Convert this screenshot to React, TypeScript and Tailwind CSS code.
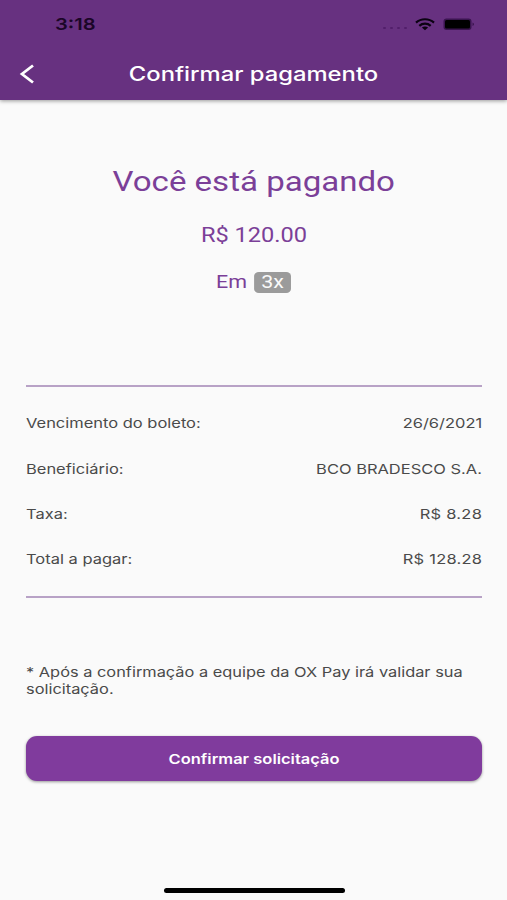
import React from 'react';

const details = [
  { label: 'Vencimento do boleto:', value: '26/6/2021', spacing: '' },
  { label: 'Beneficiário:', value: 'BCO BRADESCO S.A.', spacing: '' },
  { label: 'Taxa:', value: 'R$ 8.28', spacing: 'tracking-[0.2px]' },
  { label: 'Total a pagar:', value: 'R$ 128.28', spacing: 'tracking-[0.2px]' },
];

const StatusBar: React.FC = () => (
  <div className="flex h-[49px] items-center justify-between pl-[55px] pr-[32px] text-[#1b0628]">
    <span className="origin-left scale-x-[1.22] text-[16.5px] font-semibold leading-none">3:18</span>
    <div className="flex items-center">
      <div className="mt-[7px] mr-[8px] flex gap-[4px]">
        {[0, 1, 2, 3].map((dot) => (
          <span key={dot} className="h-[2px] w-[3px] rounded-full bg-[#521f6b]" />
        ))}
      </div>
      <svg width="20" height="13" viewBox="0 0 20 13" fill="none" stroke="#0b0212" strokeWidth="2.2">
        <path d="M1 4.6C6 .1 14 .1 19 4.6" />
        <path d="M4.3 7.8C7.6 4.9 12.4 4.9 15.7 7.8" />
        <path d="M10 12.2L6.9 9.6C8.6 8.2 11.4 8.2 13.1 9.6Z" fill="#0b0212" stroke="none" />
      </svg>
      <svg className="ml-[8px]" width="32" height="13" viewBox="0 0 32 13">
        <rect x=".5" y=".5" width="28" height="11.5" rx="3" fill="#3a144f" />
        <rect x="2" y="2" width="25" height="8.5" rx="1.5" fill="#000" />
        <path d="M29.5 4.5c2 .6 2 3 0 3.6z" fill="#3a144f" />
      </svg>
    </div>
  </div>
);

const Header: React.FC = () => (
  <header className="h-[100px] shrink-0 bg-[#673180] shadow-[0_1px_4px_rgba(0,0,0,0.4)]">
    <StatusBar />
    <div className="grid h-[50px] grid-cols-[60px_1fr_60px] items-center text-white">
      <button className="pl-[19px]" aria-label="Voltar">
        <svg width="16" height="20" viewBox="0 0 16 20" fill="none" stroke="currentColor" strokeWidth="2.8">
          <path d="M14 1.5L3 10L14 18.5" />
        </svg>
      </button>
      <h1 className="pt-[2px] scale-x-[1.22] text-center text-[19.5px] font-medium whitespace-nowrap">
        Confirmar pagamento
      </h1>
    </div>
  </header>
);

export default function App() {
  return (
    <div className="flex h-[900px] w-[507px] flex-col overflow-hidden bg-[#fafafa] font-['Inter',sans-serif] text-[#4a4a4a]">
      <Header />

      <section className="flex flex-col items-center pt-[62px] font-['Roboto',sans-serif] text-[#7b3f98]">
        <h2 className="h-[40px] scale-x-[1.18] text-[28px] leading-[40px] whitespace-nowrap">Você está pagando</h2>
        <p className="mt-[18px] h-[30px] scale-x-[1.18] text-[20px] leading-[30px]">R$ 120.00</p>
        <div className="mt-[20px] flex h-[24px] scale-x-[1.19] items-center gap-[6px] text-[18px] leading-[24px]">
          <span>Em</span>
          <span className="flex h-[21px] w-[31px] items-center justify-center rounded-[4px] bg-[#9b9b9b] text-[#fafafa]">
            3x
          </span>
        </div>
      </section>

      <main className="mx-[26px] mt-[91px] w-[456px]">
        <dl className="flex flex-col border-y-2 border-[#b8a2c6] pt-[14.5px] pb-[13.5px] text-[13.5px] leading-none">
          {details.map(({ label, value, spacing }) => (
            <div key={label} className="flex h-[45.3px] items-center justify-between whitespace-nowrap">
              <dt className="origin-left scale-x-[1.22]">{label}</dt>
              <dd className={`origin-right scale-x-[1.22] ${spacing}`}>{value}</dd>
            </div>
          ))}
        </dl>

        <p className="mt-[66px] origin-left scale-x-[1.213] text-[13.5px] leading-[16.5px] whitespace-nowrap">
          * Após a confirmação a equipe da OX Pay irá validar sua
          <br />
          solicitação.
        </p>

        <button className="mt-[39px] flex h-[45px] w-full items-center justify-center rounded-[11px] bg-[#803b9d] text-white shadow-[0_1px_3px_rgba(0,0,0,0.4)]">
          <span className="scale-x-[1.22] text-[13.5px] font-semibold whitespace-nowrap">Confirmar solicitação</span>
        </button>
      </main>

      <div className="mt-auto mb-[7px] ml-[164px] h-[5px] w-[181px] rounded-full bg-black" />
    </div>
  );
}
